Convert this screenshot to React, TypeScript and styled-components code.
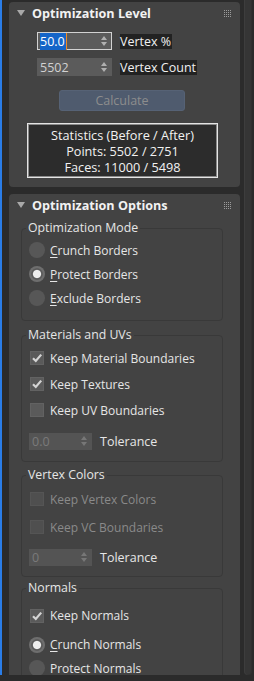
import React from 'react';
import styled, { createGlobalStyle } from 'styled-components';

const Global = createGlobalStyle`
  html, body { margin: 0; padding: 0; background: #2b2b2b; }
  body {
    font-family: "Open Sans", "Noto Sans", sans-serif;
    font-size: 12px;
    color: #e4e4e4;
  }
`;

const Frame = styled.div`
  display: flex;
  width: 254px;
  height: 681px;
  box-sizing: border-box;
  padding-bottom: 6px;
  overflow: hidden;
  background: #2b2b2b;
`;

const Accent = styled.div`
  flex: none;
  width: 2px;
  background: #2a7de8;
`;

const Column = styled.div`
  flex: none;
  width: 231px;
  margin-left: 7px;
  padding-top: 2px;
  display: flex;
  flex-direction: column;
  gap: 7px;
  overflow: hidden;
`;

const ScrollTrack = styled.div`
  flex: none;
  width: 8px;
  margin-left: 4px;
  background: #353535;
  border-radius: 0 0 4px 4px;
  box-shadow: inset 1px 0 0 #3d3d3d, inset -1px 0 0 #303030;
`;

const Panel = styled.section`
  flex: none;
  background: #434343;
  border-radius: 4px;
`;

const Header = styled.div`
  height: 22px;
  display: flex;
  align-items: center;
  padding: 0 9px 0 8px;
`;

const Title = styled.span`
  flex: 1;
  margin-left: 7px;
  font-weight: 700;
  font-size: 12.6px;
  color: #f2f2f2;
`;

const Body1 = styled.div`
  padding: 8px 0 9px 28px;
  display: flex;
  flex-direction: column;
`;

const SpinRow = styled.div<{ $mt?: number }>`
  display: flex;
  align-items: center;
  gap: 8px;
  height: 18px;
  margin-top: ${(p) => p.$mt ?? 0}px;
`;

const Field = styled.div<{ $w: number; $h: number; $focus?: boolean; $disabled?: boolean }>`
  flex: none;
  width: ${(p) => p.$w}px;
  height: ${(p) => p.$h}px;
  box-sizing: border-box;
  display: flex;
  align-items: center;
  justify-content: space-between;
  padding: 0 4px 0 2px;
  background: ${(p) => (p.$disabled ? '#545454' : '#5b5b5b')};
  border: 1px solid ${(p) => (p.$focus ? '#d2d2d2' : p.$disabled ? '#545454' : '#5b5b5b')};
  color: ${(p) => (p.$disabled ? '#7a7a7a' : '#d2d2d2')};
  font-size: 12.5px;
`;

const Selected = styled.span`
  background: #1565c8;
  color: #ffffff;
  line-height: 14px;
  padding-right: 1px;
  border-right: 1px solid #f08a24;
`;

const DarkLabel = styled.span`
  background: #222222;
  line-height: 15px;
  padding: 0 1px 0 0;
  font-size: 12.5px;
  color: #f0f0f0;
`;

const CalcButton = styled.div`
  margin: 14px 0 0 22px;
  width: 126px;
  height: 21px;
  box-sizing: border-box;
  border-radius: 3px;
  background: #4f5b6e;
  border: 1px solid #566275;
  color: #8d8d8d;
  font-size: 12.5px;
  display: flex;
  align-items: center;
  justify-content: center;
`;

const Stats = styled.div`
  margin: 12px 0 0 -10px;
  width: 191px;
  height: 55px;
  box-sizing: border-box;
  border: 1px solid #e4e4e4;
  box-shadow: inset 0 0 0 1px #8a8a8a;
  background: #2c2c2c;
  padding-top: 3px;
  text-align: center;
  line-height: 16px;
  font-size: 12.7px;
  color: #f2f2f2;
`;

const Group = styled.fieldset<{ $mt: number; $pb: number }>`
  margin: ${(p) => p.$mt}px 17px 0 12px;
  padding: 3px 0 ${(p) => p.$pb}px 0;
  border: 1px solid #393939;
  border-radius: 4px;
  min-width: 0;
`;

const Legend = styled.legend`
  margin-left: 4px;
  padding: 0 2px;
  line-height: 14px;
  font-size: 12.3px;
  color: #e6e6e6;
`;

const Row = styled.div<{ $h: number; $disabled?: boolean }>`
  height: ${(p) => p.$h}px;
  padding-left: 7px;
  display: flex;
  align-items: center;
  gap: 5px;
  font-size: 12px;
  color: ${(p) => (p.$disabled ? '#8a8a8a' : '#e6e6e6')};
`;

const ToleranceRow = styled(Row)`
  gap: 8px;
  font-size: 12.5px;
`;

const Slot = styled.span`
  flex: none;
  width: 16px;
  height: 16px;
  display: flex;
  align-items: center;
  justify-content: center;
`;

const RadioDot = styled.span<{ $on?: boolean }>`
  width: 16px;
  height: 16px;
  border-radius: 50%;
  background: ${(p) =>
    p.$on
      ? 'radial-gradient(circle, #ededed 0 3.6px, #5a5a5a 4.6px 5.4px, #6e6e6e 6.2px)'
      : '#575757'};
`;

const Box = styled.span<{ $disabled?: boolean }>`
  width: 14px;
  height: 14px;
  box-sizing: border-box;
  background: ${(p) => (p.$disabled ? '#4f4f4f' : '#5a5a5a')};
  border: 1px solid ${(p) => (p.$disabled ? '#555555' : '#626262')};
  display: flex;
  align-items: center;
  justify-content: center;
`;

const Key = styled.span`
  text-decoration: underline;
  text-underline-offset: 2px;
`;

const Caret = () => (
  <svg width="8" height="6" viewBox="0 0 8 6">
    <polygon points="0,0 8,0 4,6" fill="#a9a9a9" />
  </svg>
);

const Grip = () => (
  <svg width="7" height="7" viewBox="0 0 7 7">
    {[0, 2, 4, 6].map((y) =>
      [0, 2, 4, 6].map((x) => <rect key={`${x}-${y}`} x={x} y={y} width="1" height="1" fill="#9c9c9c" />)
    )}
  </svg>
);

const Arrows = ({ dim }: { dim?: boolean }) => (
  <svg width="6" height="10" viewBox="0 0 6 10">
    <polygon points="3,0 6,4 0,4" fill={dim ? '#777' : '#b0b0b0'} />
    <polygon points="0,6 6,6 3,10" fill={dim ? '#777' : '#b0b0b0'} />
  </svg>
);

const Check = () => (
  <svg width="12" height="12" viewBox="0 0 12 12">
    <path d="M2 6.2 L4.8 9 L10.2 2.6" fill="none" stroke="#d4d4d4" strokeWidth="2.2" />
  </svg>
);

const Radio = ({ on, children, h }: { on?: boolean; children: React.ReactNode; h: number }) => (
  <Row $h={h}>
    <Slot>
      <RadioDot $on={on} />
    </Slot>
    <span>{children}</span>
  </Row>
);

const CheckRow = ({
  on,
  disabled,
  children,
  h,
}: {
  on?: boolean;
  disabled?: boolean;
  children: React.ReactNode;
  h: number;
}) => (
  <Row $h={h} $disabled={disabled}>
    <Slot>
      <Box $disabled={disabled}>{on && <Check />}</Box>
    </Slot>
    <span>{children}</span>
  </Row>
);

const Tolerance = ({ value, h }: { value: string; h: number }) => (
  <ToleranceRow $h={h}>
    <Field $w={63} $h={17} $disabled>
      <span>{value}</span>
      <Arrows dim />
    </Field>
    <span>Tolerance</span>
  </ToleranceRow>
);

const PanelHeader = ({ title }: { title: string }) => (
  <Header>
    <Caret />
    <Title>{title}</Title>
    <Grip />
  </Header>
);

export default function App() {
  return (
    <>
      <Global />
      <Frame>
        <Accent />
        <Column>
          <Panel>
            <PanelHeader title="Optimization Level" />
            <Body1>
              <SpinRow>
                <Field $w={75} $h={18} $focus>
                  <span>
                    <Selected>50.0</Selected>
                  </span>
                  <Arrows />
                </Field>
                <DarkLabel>Vertex %</DarkLabel>
              </SpinRow>
              <SpinRow $mt={8}>
                <Field $w={75} $h={18}>
                  <span>5502</span>
                  <Arrows />
                </Field>
                <DarkLabel>Vertex Count</DarkLabel>
              </SpinRow>
              <CalcButton>Calculate</CalcButton>
              <Stats>
                <div>Statistics (Before / After)</div>
                <div>Points: 5502 / 2751</div>
                <div>Faces: 11000 / 5498</div>
              </Stats>
            </Body1>
          </Panel>
          <Panel>
            <PanelHeader title="Optimization Options" />
            <Group $mt={5} $pb={10}>
              <Legend>Optimization Mode</Legend>
              <Radio h={24}>
                <Key>C</Key>runch Borders
              </Radio>
              <Radio h={24} on>
                <Key>P</Key>rotect Borders
              </Radio>
              <Radio h={24}>
                <Key>E</Key>xclude Borders
              </Radio>
            </Group>
            <Group $mt={7} $pb={2}>
              <Legend>Materials and UVs</Legend>
              <CheckRow h={26} on>
                Keep Material Boundaries
              </CheckRow>
              <CheckRow h={26} on>
                Keep Textures
              </CheckRow>
              <CheckRow h={26}>Keep UV Boundaries</CheckRow>
              <Tolerance value="0.0" h={36} />
            </Group>
            <Group $mt={6} $pb={3}>
              <Legend>Vertex Colors</Legend>
              <CheckRow h={28} disabled>
                Keep Vertex Colors
              </CheckRow>
              <CheckRow h={28} disabled>
                Keep VC Boundaries
              </CheckRow>
              <Tolerance value="0" h={32} />
            </Group>
            <Group $mt={4} $pb={3}>
              <Legend>Normals</Legend>
              <CheckRow h={35} on>
                Keep Normals
              </CheckRow>
              <Radio h={23} on>
                <Key>C</Key>runch Normals
              </Radio>
              <Radio h={24}>Protect Normals</Radio>
            </Group>
          </Panel>
        </Column>
        <ScrollTrack />
      </Frame>
    </>
  );
}
